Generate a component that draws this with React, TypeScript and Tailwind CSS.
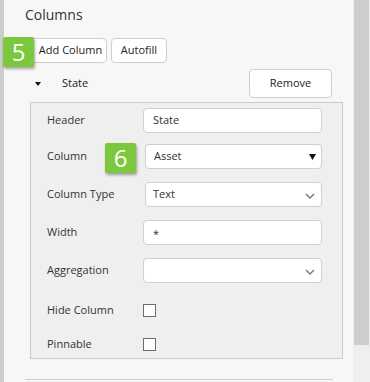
import React from "react";

const font = { fontFamily: '"Open Sans", "Noto Sans", sans-serif' };

function Badge({ n }: { n: string }) {
  return (
    <div className="flex h-[30px] w-[31px] items-center justify-center rounded-[2px] bg-[#7cc83c] text-[24px] leading-none text-white shadow-[1px_2px_3px_rgba(0,0,0,0.35)]">
      {n}
    </div>
  );
}

function Chevron() {
  return (
    <svg width="10" height="6" viewBox="0 0 10 6" className="absolute right-[6px] top-[10px]">
      <path d="M1 1 L5 5 L9 1" fill="none" stroke="#777" strokeWidth="1.4" />
    </svg>
  );
}

function Row({ label, h, children, badge }: { label: string; h: string; children?: React.ReactNode; badge?: string }) {
  return (
    <div className={`relative flex items-center ${h}`}>
      <div className="w-[111px] shrink-0 pl-[16px] text-[11px] text-[#333]">{label}</div>
      {children}
      {badge && (
        <div className="absolute left-[74px] top-[6px]">
          <Badge n={badge} />
        </div>
      )}
    </div>
  );
}

export default function App() {
  return (
    <div className="flex h-[382px] w-[370px] overflow-hidden bg-[#f7f7f7]" style={font}>
      <div className="w-[4px] shrink-0 bg-[#cdcdcd]" />
      <div className="relative flex-1">
        <div className="pl-[21px] pt-[4px] text-[14px] leading-[22px] text-[#333]">Columns</div>
        <div className="relative mt-[12px] flex gap-[4px] pl-[26px]">
          <button className="h-[25px] w-[77px] rounded-[4px] border border-[#cfcfcf] bg-white pl-[4px] text-[11px] text-[#222]">
            Add Column
          </button>
          <button className="h-[25px] w-[56px] rounded-[4px] border border-[#cfcfcf] bg-white text-[11px] text-[#222]">
            Autofill
          </button>
          <div className="absolute left-[-1px] top-[-1px]">
            <Badge n="5" />
          </div>
        </div>
        <div className="mt-[6px] flex h-[29px] items-center pl-[31px] pr-[21px]">
          <svg width="6" height="4" viewBox="0 0 6 4" className="mr-[21px]">
            <path d="M0 0 L6 0 L3 4 Z" fill="#111" />
          </svg>
          <span className="text-[11px] text-[#222]">State</span>
          <button className="ml-auto h-[29px] w-[83px] rounded-[4px] border border-[#cfcfcf] bg-white text-[11px] text-[#222]">
            Remove
          </button>
        </div>
        <div className="ml-[26px] mr-[10px] mt-[4px] border border-[#cbcbcb] bg-[#efefef]">
          <Row label="Header" h="h-[34px]">
            <div className="ml-[1px] flex h-[25px] w-[179px] items-center rounded-[4px] border border-[#cfcfcf] bg-white pl-[9px] text-[11px] text-[#333]">
              State
            </div>
          </Row>
          <Row label="Column" h="h-[38px]" badge="6">
            <div className="relative ml-[3px] flex h-[25px] w-[177px] items-center rounded-[4px] border border-[#cfcfcf] bg-white pl-[8px] text-[11px] text-[#333]">
              Asset
              <svg width="7" height="6" viewBox="0 0 7 6" className="absolute right-[5px] top-[9px]">
                <path d="M0 0 L7 0 L3.5 6 Z" fill="#111" />
              </svg>
            </div>
          </Row>
          <Row label="Column Type" h="h-[38px]">
            <div className="relative ml-[3px] flex h-[25px] w-[177px] items-center rounded-[4px] border border-[#cfcfcf] bg-white pl-[7px] text-[11px] text-[#333]">
              Text
              <Chevron />
            </div>
          </Row>
          <Row label="Width" h="h-[38px]">
            <div className="ml-[1px] flex h-[25px] w-[179px] items-center rounded-[4px] border border-[#cfcfcf] bg-white pl-[9px] pt-[4px] text-[11px] text-[#333]">
              *
            </div>
          </Row>
          <Row label="Aggregation" h="h-[38px]">
            <div className="relative ml-[1px] h-[25px] w-[179px] rounded-[4px] border border-[#cfcfcf] bg-white">
              <Chevron />
            </div>
          </Row>
          <Row label="Hide Column" h="h-[42px]">
            <div className="ml-[1px] h-[13px] w-[13px] border border-[#6d6d6d] bg-white" />
          </Row>
          <Row label="Pinnable" h="h-[27px]">
            <div className="ml-[1px] h-[13px] w-[13px] border border-[#6d6d6d] bg-white" />
          </Row>
        </div>
        <div className="ml-[21px] mt-[20px] h-px w-[308px] bg-[#cfcfcf]" />
      </div>
      <div className="relative w-[17px] shrink-0 bg-[#efefef]">
        <div className="ml-[1px] h-[345px] w-[15px] bg-[#cdcdcd]" />
      </div>
    </div>
  );
}
